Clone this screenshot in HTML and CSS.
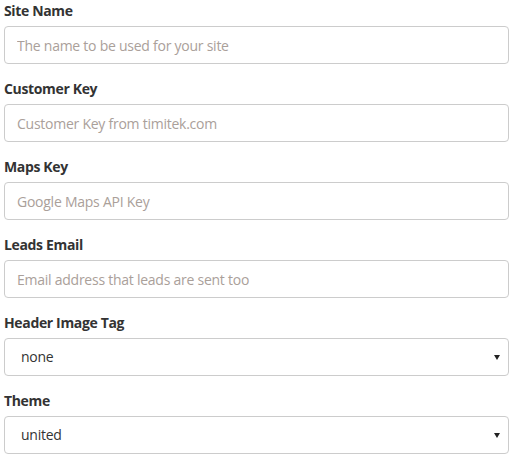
FILE: index.html
```html
<!DOCTYPE html>
<html>
<head>
<meta charset="utf-8">
<link rel="stylesheet" href="styles.css">
</head>
<body>
<form class="form">
  <div class="group">
    <label class="label">Site Name</label>
    <input class="control" type="text" placeholder="The name to be used for your site">
  </div>
  <div class="group">
    <label class="label">Customer Key</label>
    <input class="control" type="text" placeholder="Customer Key from timitek.com">
  </div>
  <div class="group">
    <label class="label">Maps Key</label>
    <input class="control" type="text" placeholder="Google Maps API Key">
  </div>
  <div class="group">
    <label class="label">Leads Email</label>
    <input class="control" type="text" placeholder="Email address that leads are sent too">
  </div>
  <div class="group">
    <label class="label">Header Image Tag</label>
    <div class="select-wrap">
      <select class="control select"><option>none</option></select>
    </div>
  </div>
  <div class="group">
    <label class="label">Theme</label>
    <div class="select-wrap">
      <select class="control select"><option>united</option></select>
    </div>
  </div>
</form>
</body>
</html>
```
FILE: styles.css
```css
html, body {
  margin: 0;
  padding: 0;
  background: #fff;
}
body {
  font-family: "Open Sans", "Noto Sans", sans-serif;
  font-size: 14px;
  line-height: 20px;
  color: #333;
}
.form {
  display: flex;
  flex-direction: column;
  padding: 1px 8px 0 4px;
}
.group {
  display: flex;
  flex-direction: column;
  margin-bottom: 15px;
}
.label {
  font-weight: bold;
  margin-bottom: 5px;
  line-height: 20px;
  letter-spacing: -0.35px;
  color: #333;
}
.control {
  box-sizing: border-box;
  height: 38px;
  width: 100%;
  padding: 8px 12px;
  font-family: inherit;
  font-size: 14px;
  line-height: 20px;
  letter-spacing: -0.25px;
  color: #555;
  background: #fff;
  border: 1px solid #ccc;
  border-radius: 4px;
  outline: none;
  margin: 0;
}
.control::placeholder {
  color: #aaa09a;
  opacity: 1;
}
.select-wrap {
  position: relative;
}
.select {
  -webkit-appearance: none;
  appearance: none;
  padding-left: 16px;
  color: #333;
}
.select-wrap::after {
  content: "";
  position: absolute;
  right: 9px;
  top: 17px;
  width: 0;
  height: 0;
  border-left: 3px solid transparent;
  border-right: 3px solid transparent;
  border-top: 5px solid #222;
  pointer-events: none;
}
```
